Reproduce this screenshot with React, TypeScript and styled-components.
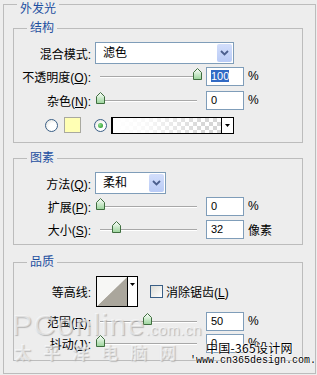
import React, { FunctionComponent } from 'react';
import styled, { createGlobalStyle } from 'styled-components';

const GlobalStyle = createGlobalStyle`
  html, body {
    margin: 0;
    padding: 0;
    background: #ededed;
  }
  body {
    font-family: "Liberation Sans", "Noto Sans CJK SC", sans-serif;
    font-size: 12px;
    color: #000;
  }
`;

const Page = styled.div`
  position: relative;
  width: 317px;
  height: 375px;
  overflow: hidden;
  box-sizing: border-box;
  padding: 4px 0 0 3px;
  background: #ededed;
`;

const Group = styled.section<{ $mt: number; $h: number }>`
  position: relative;
  box-sizing: border-box;
  width: 290px;
  height: ${p => p.$h}px;
  margin-top: ${p => p.$mt}px;
  padding-top: 13px;
  border: 1px solid #bcbcbc;
`;

const OuterGroup = styled.section`
  position: relative;
  box-sizing: border-box;
  width: 313px;
  height: 370px;
  padding-left: 9px;
  border: 1px solid #bcbcbc;
  display: flex;
  flex-direction: column;
`;

const Title = styled.span<{ $top: number }>`
  position: absolute;
  top: ${p => p.$top}px;
  left: 13px;
  padding: 0 3px;
  line-height: 16px;
  font-size: 12px;
  color: #1d4fa0;
  background: #ededed;
`;

const Row = styled.div<{ $h: number; $indent?: number }>`
  display: flex;
  align-items: center;
  height: ${p => p.$h}px;
  padding-left: ${p => p.$indent ?? 0}px;
`;

const Label = styled.span`
  width: 77px;
  flex-shrink: 0;
  text-align: right;
  white-space: nowrap;
  margin-right: 4px;
`;

const Select = styled.div<{ $w: number }>`
  box-sizing: border-box;
  width: ${p => p.$w}px;
  height: 22px;
  display: flex;
  align-items: stretch;
  background: #fff;
  border: 1px solid #7f9db9;
`;

const SelectText = styled.span`
  flex: 1;
  padding-left: 7px;
  line-height: 20px;
`;

const SelectButton = styled.span`
  width: 15px;
  margin: 1px;
  border-radius: 2px;
  background: linear-gradient(#d3defb, #b9cbf6);
  display: flex;
  align-items: center;
  justify-content: center;
`;

const SliderBox = styled.div`
  position: relative;
  width: 111px;
  height: 100%;
  flex-shrink: 0;
`;

const Track = styled.div`
  position: absolute;
  left: 5px;
  right: 9px;
  top: 50%;
  height: 1px;
  background: #a8a8a8;
  border-bottom: 1px solid #fff;
`;

const Thumb = styled.svg`
  position: absolute;
  top: calc(50% - 8px);
  width: 9px;
  height: 12px;
`;

const NumInput = styled.div`
  box-sizing: border-box;
  width: 38px;
  height: 19px;
  flex-shrink: 0;
  padding-left: 4px;
  background: #fff;
  border: 1px solid #7f9db9;
  font-size: 11px;
  line-height: 17px;
`;

const Selected = styled.span`
  background: #316ac5;
  color: #fff;
`;

const Unit = styled.span`
  margin-left: 4px;
  white-space: nowrap;
`;

const Radio = styled.span<{ $checked?: boolean; $ml: number }>`
  box-sizing: border-box;
  width: 13px;
  height: 13px;
  margin-left: ${p => p.$ml}px;
  border-radius: 50%;
  border: 1px solid #3a5f86;
  background: radial-gradient(circle at 65% 65%, #fff 40%, #dcdcd6);
  display: flex;
  align-items: center;
  justify-content: center;
  &::after {
    content: '';
    display: ${p => (p.$checked ? 'block' : 'none')};
    width: 5px;
    height: 5px;
    border-radius: 50%;
    background: radial-gradient(circle at 35% 35%, #8fe08f, #1d8f1d);
  }
`;

const Swatch = styled.span`
  box-sizing: border-box;
  width: 17px;
  height: 16px;
  margin-left: 6px;
  background: #ffffb4;
  border: 1px solid #a9a9a0;
`;

const GradientPicker = styled.div`
  box-sizing: border-box;
  width: 123px;
  height: 17px;
  margin-left: 4px;
  display: flex;
  border: 1px solid #000;
  border-left-width: 2px;
`;

const GradientFill = styled.span`
  flex: 1;
  background:
    linear-gradient(to right, #fff 0%, rgba(255, 255, 255, 0.85) 30%, rgba(255, 255, 255, 0) 85%),
    repeating-conic-gradient(#d6d6d6 0% 25%, #fff 0% 50%) 0 0 / 8px 8px;
`;

const DropCell = styled.span`
  width: 11px;
  border-left: 1px solid #000;
  background: #fff;
  display: flex;
  align-items: center;
  justify-content: center;
`;

const Contour = styled.div`
  box-sizing: border-box;
  width: 42px;
  height: 31px;
  margin-left: 1px;
  display: flex;
  border: 1px solid #000;
  background: #fff;
`;

const ContourCurve = styled.svg`
  width: 30px;
  height: 29px;
  display: block;
`;

const ContourDrop = styled.span`
  flex: 1;
  border-left: 1px solid #000;
  display: flex;
  justify-content: center;
  padding-top: 6px;
`;

const CheckBox = styled.span`
  box-sizing: border-box;
  width: 13px;
  height: 13px;
  margin-left: 12px;
  border: 1px solid #3a5f86;
  background: linear-gradient(135deg, #dcdcd6, #fff);
`;

const CheckText = styled.span`
  margin-left: 3px;
  white-space: nowrap;
`;

// faint site watermarks laid over the bottom of the dialog
const WaterBig = styled.div`
  position: absolute;
  left: 12px;
  top: 308px;
  font-family: "Liberation Sans", sans-serif;
  font-size: 30px;
  letter-spacing: 1.5px;
  color: rgba(255, 255, 255, 0.55);
  text-shadow: 1px 1px 1px rgba(160, 160, 160, 0.7);
  white-space: nowrap;
  pointer-events: none;
`;

const WaterSmall = styled.span`
  font-size: 15px;
  letter-spacing: 0.5px;
`;

const WaterCn = styled.div`
  position: absolute;
  left: 14px;
  top: 342px;
  font-family: "Noto Sans CJK SC", sans-serif;
  font-weight: 700;
  font-size: 17px;
  line-height: 20px;
  letter-spacing: 12px;
  color: rgba(255, 255, 255, 0.55);
  text-shadow: 1px 1px 1px rgba(170, 170, 170, 0.7);
  white-space: nowrap;
  pointer-events: none;
`;

const Stamp = styled.div<{ $top: number; $left: number; $mono?: boolean }>`
  position: absolute;
  top: ${p => p.$top}px;
  left: ${p => p.$left}px;
  font-family: ${p => (p.$mono ? '"Liberation Mono", monospace' : '"Noto Sans CJK SC", sans-serif')};
  font-size: ${p => (p.$mono ? 10 : 12)}px;
  line-height: ${p => (p.$mono ? 10 : 14)}px;
  letter-spacing: ${p => (p.$mono ? 0 : 0.3)}px;
  color: #000;
  white-space: nowrap;
  text-shadow: 0 0 2px #fff, 0 0 2px #fff, 0 0 1px #fff;
`;

const Chevron = () => (
  <svg width="9" height="6" viewBox="0 0 9 6">
    <path d="M1 1 L4.5 4.5 L8 1" fill="none" stroke="#4b5f8e" strokeWidth="1.8" />
  </svg>
);

const DownTri = () => (
  <svg width="5" height="3" viewBox="0 0 5 3">
    <path d="M0 0 H5 L2.5 3 Z" fill="#000" />
  </svg>
);

const Slider: FunctionComponent<{ frac: number }> = ({ frac }) => (
  <SliderBox>
    <Track />
    <Thumb viewBox="0 0 9 12" style={{ left: 5 + frac * 97 - 4.5 }}>
      <defs>
        <linearGradient id="thumbFill" x1="0" y1="0" x2="0" y2="1">
          <stop offset="0" stopColor="#ffffff" />
          <stop offset="1" stopColor="#9ad49a" />
        </linearGradient>
      </defs>
      <path d="M4.5 0.5 L8.5 4.5 V11.5 H0.5 V4.5 Z" fill="url(#thumbFill)" stroke="#3f6e3f" strokeWidth="1" />
    </Thumb>
  </SliderBox>
);

const SliderRow: FunctionComponent<{
  h: number;
  label: React.ReactNode;
  frac: number;
  value: React.ReactNode;
  unit: string;
}> = ({ h, label, frac, value, unit }) => (
  <Row $h={h}>
    <Label>{label}</Label>
    <Slider frac={frac} />
    <NumInput>{value}</NumInput>
    <Unit>{unit}</Unit>
  </Row>
);

const App: FunctionComponent = () => (
  <>
    <GlobalStyle />
    <Page>
      <OuterGroup>
        <Title $top={-4}>外发光</Title>

        <Group $mt={23} $h={115}>
          <Title $top={-9}>结构</Title>
          <Row $h={22}>
            <Label>混合模式:</Label>
            <Select $w={139}>
              <SelectText>滤色</SelectText>
              <SelectButton><Chevron /></SelectButton>
            </Select>
          </Row>
          <SliderRow h={24} label={<>不透明度(<u>O</u>):</>} frac={1} value={<Selected>100</Selected>} unit="%" />
          <SliderRow h={24} label={<>杂色(<u>N</u>):</>} frac={0} value="0" unit="%" />
          <Row $h={26} $indent={31}>
            <Radio $ml={0} />
            <Swatch />
            <Radio $ml={13} $checked />
            <GradientPicker>
              <GradientFill />
              <DropCell><DownTri /></DropCell>
            </GradientPicker>
          </Row>
        </Group>

        <Group $mt={15} $h={87}>
          <Title $top={-9}>图素</Title>
          <Row $h={22}>
            <Label>方法(<u>Q</u>):</Label>
            <Select $w={71}>
              <SelectText>柔和</SelectText>
              <SelectButton><Chevron /></SelectButton>
            </Select>
          </Row>
          <SliderRow h={24} label={<>扩展(<u>P</u>):</>} frac={0} value="0" unit="%" />
          <SliderRow h={22} label={<>大小(<u>S</u>):</>} frac={0.175} value="32" unit="像素" />
        </Group>

        <Group $mt={17} $h={99}>
          <Title $top={-9}>品质</Title>
          <Row $h={31}>
            <Label>等高线:</Label>
            <Contour>
              <ContourCurve viewBox="0 0 30 29">
                <path d="M0 29 L30 0 V29 Z" fill="#aaa69c" />
                <path d="M0 0 H30 L0 29 Z" fill="#f7f7f5" />
              </ContourCurve>
              <ContourDrop><DownTri /></ContourDrop>
            </Contour>
            <CheckBox />
            <CheckText>消除锯齿(<u>L</u>)</CheckText>
          </Row>
          <SliderRow h={28} label={<>范围(<u>R</u>):</>} frac={0.485} value="50" unit="%" />
          <SliderRow h={16} label={<>抖动(<u>J</u>):</>} frac={0} value="0" unit="%" />
        </Group>
      </OuterGroup>

      <WaterBig>PConline<WaterSmall>.com.cn</WaterSmall></WaterBig>
      <WaterCn>太平洋电脑网</WaterCn>
      <Stamp $top={341} $left={206}>中国-365设计网</Stamp>
      <Stamp $top={356} $left={190} $mono>'www.cn365design.com.</Stamp>
    </Page>
  </>
);

export default App;
